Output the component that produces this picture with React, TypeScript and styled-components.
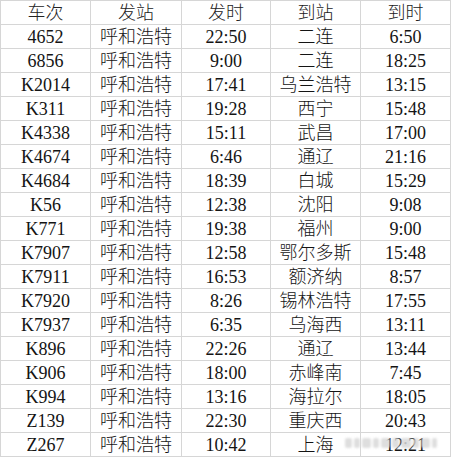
import React from "react";
import styled, { createGlobalStyle } from "styled-components";

const GlobalStyle = createGlobalStyle`
  html, body {
    margin: 0;
    padding: 0;
    background: #ffffff;
  }
  body {
    font-family: "Liberation Serif", "Noto Sans CJK SC", serif;
  }
`;

const Wrapper = styled.div`
  position: relative;
  width: 451px;
  height: 457px;
  overflow: hidden;
  background: #ffffff;
`;

const Grid = styled.div`
  display: grid;
  grid-template-columns: 90px 91px 89px 90px 90px;
  grid-auto-rows: 24px;
  border-top: 1px solid #d6d6d6;
  border-left: 1px solid #d6d6d6;
  width: 450px;
`;

const Cell = styled.div<{ $header?: boolean }>`
  display: flex;
  align-items: center;
  justify-content: center;
  border-right: 1px solid #d6d6d6;
  border-bottom: 1px solid #d6d6d6;
  font-family: "Liberation Serif", "Noto Sans CJK SC", serif;
  font-size: 18px;
  font-weight: 300;
  line-height: 1;
  color: ${(p) => (p.$header ? "#222222" : "#141414")};
  white-space: nowrap;
  padding-top: 1px;
  box-sizing: border-box;
`;

const Watermark = styled.div`
  position: absolute;
  left: 345px;
  top: 437px;
  width: 92px;
  height: 12px;
  display: flex;
  align-items: center;
  gap: 2px;
  filter: blur(1px);
  opacity: 0.85;
`;

const Blob = styled.span<{ $w: number }>`
  display: block;
  width: ${(p) => p.$w}px;
  height: 10px;
  background: #d9d9d9;
  border-radius: 2px;
`;

const headers = ["车次", "发站", "发时", "到站", "到时"];

const rows: string[][] = [
  ["4652", "呼和浩特", "22:50", "二连", "6:50"],
  ["6856", "呼和浩特", "9:00", "二连", "18:25"],
  ["K2014", "呼和浩特", "17:41", "乌兰浩特", "13:15"],
  ["K311", "呼和浩特", "19:28", "西宁", "15:48"],
  ["K4338", "呼和浩特", "15:11", "武昌", "17:00"],
  ["K4674", "呼和浩特", "6:46", "通辽", "21:16"],
  ["K4684", "呼和浩特", "18:39", "白城", "15:29"],
  ["K56", "呼和浩特", "12:38", "沈阳", "9:08"],
  ["K771", "呼和浩特", "19:38", "福州", "9:00"],
  ["K7907", "呼和浩特", "12:58", "鄂尔多斯", "15:48"],
  ["K7911", "呼和浩特", "16:53", "额济纳", "8:57"],
  ["K7920", "呼和浩特", "8:26", "锡林浩特", "17:55"],
  ["K7937", "呼和浩特", "6:35", "乌海西", "13:11"],
  ["K896", "呼和浩特", "22:26", "通辽", "13:44"],
  ["K906", "呼和浩特", "18:00", "赤峰南", "7:45"],
  ["K994", "呼和浩特", "13:16", "海拉尔", "18:05"],
  ["Z139", "呼和浩特", "22:30", "重庆西", "20:43"],
  ["Z267", "呼和浩特", "10:42", "上海", "12:21"],
];

export default function App() {
  return (
    <Wrapper>
      <GlobalStyle />
      <Grid>
        {headers.map((h) => (
          <Cell key={h} $header>
            {h}
          </Cell>
        ))}
        {rows.map((r, i) =>
          r.map((c, j) => <Cell key={`${i}-${j}`}>{c}</Cell>)
        )}
      </Grid>
      <Watermark>
        {[8, 6, 10, 7, 9, 8, 11, 7, 9, 6].map((w, i) => (
          <Blob key={i} $w={w} />
        ))}
      </Watermark>
    </Wrapper>
  );
}
